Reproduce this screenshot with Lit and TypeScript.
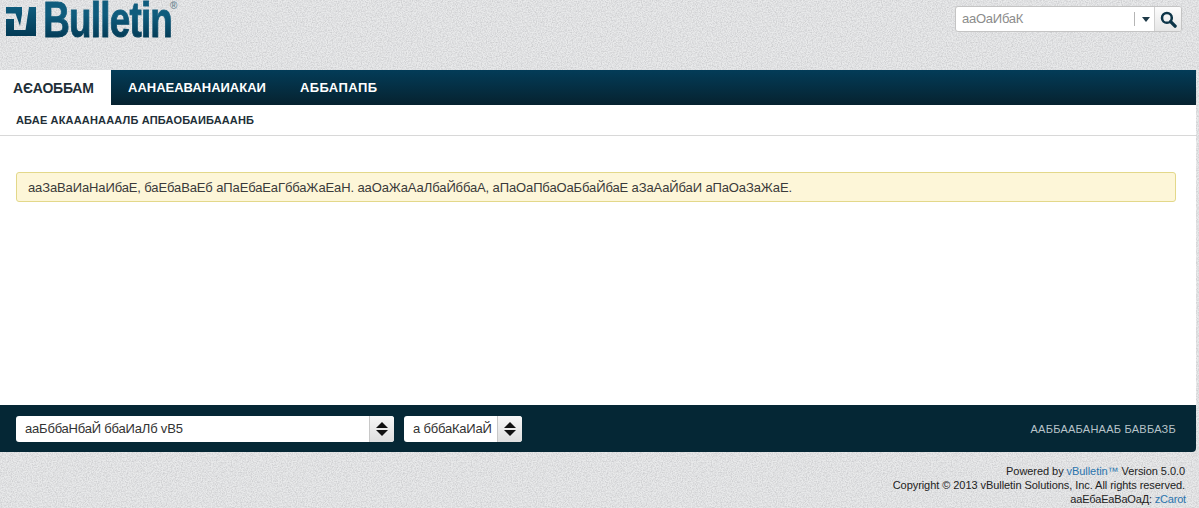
import { LitElement, html, css, unsafeCSS } from "lit";
import { customElement } from "lit/decorators.js";

const noise = `url("data:image/svg+xml,%3Csvg xmlns='http://www.w3.org/2000/svg' width='240' height='240'%3E%3Cfilter id='n' x='0' y='0' width='100%25' height='100%25'%3E%3CfeTurbulence type='fractalNoise' baseFrequency='.8' numOctaves='2' stitchTiles='stitch'/%3E%3CfeColorMatrix values='0 0 0 0 .4 0 0 0 0 .4 0 0 0 0 .42 .9 0 0 0 -.3'/%3E%3C/filter%3E%3Crect width='240' height='240' filter='url(%23n)'/%3E%3C/svg%3E")`;

@customElement("app-root")
export class AppRoot extends LitElement {
  static styles = css`
    :host {
      display: block;
      width: 1199px;
      height: 508px;
      overflow: hidden;
      font-family: "Liberation Sans", Arial, sans-serif;
      background-color: #e9eaeb;
      background-image: ${unsafeCSS(noise)};
      color: #333;
    }
    .page { display: flex; flex-direction: column; width: 1196px; height: 508px; }
    .header { height: 70px; display: flex; justify-content: space-between; align-items: flex-start; flex: none; }
    .logo { display: flex; align-items: flex-start; margin-left: 6px; height: 38px; position: relative; width: 180px; }
    .logo svg { margin-top: 7px; flex: none; }
    .wordmark-clip { width: 133px; height: 38px; overflow: hidden; flex: none; margin-left: 5px; }
    .wordmark {
      display: block; width: max-content; font-size: 50px; font-weight: 700; line-height: 50px; letter-spacing: -1px;
      transform: scaleX(.735); transform-origin: 0 0;
      margin-top: -5px; padding: 0 3px; white-space: nowrap;
      background: linear-gradient(#0f5c7d 14px, #0f5c7d 20px, #023a55 44px);
      -webkit-background-clip: text; background-clip: text; color: transparent;
      -webkit-text-stroke: 1px transparent;
    }
    .reg { position: absolute; left: 164px; top: 1px; font-size: 10px; line-height: 10px; color: #6f8894; font-weight: 700; }
    .search {
      margin: 6px 14px 0 0; width: 227px; height: 26px; box-sizing: border-box;
      display: flex; border: 1px solid #c4c4c4; border-radius: 3px; background: #fff; overflow: hidden;
    }
    .search-input { flex: 1; display: flex; align-items: center; padding: 0 0 1px 6px; font-size: 13px; letter-spacing: -.25px; color: #8c8c8c; }
    .caret-wrap { width: 20px; display: flex; align-items: center; justify-content: center; position: relative; }
    .caret-wrap::before { content: ""; position: absolute; left: 0; top: 5px; bottom: 5px; border-left: 1px solid #b5b5b5; }
    .caret { width: 0; height: 0; border: 4px solid transparent; border-top: 5px solid #1e3a48; border-bottom: 0; margin-left: 4px; margin-top: 1px; }
    .search-btn { width: 26px; display: flex; align-items: center; justify-content: center; background: linear-gradient(#fcfcfc, #e6e6e6); border-left: 1px solid #d0d0d0; }
    .nav {
      flex: none; height: 35px; display: flex;
      background: linear-gradient(#033c58, #06222f);
      font-size: 13px; font-weight: 700; color: #fff;
    }
    .tab { display: flex; align-items: center; padding: 0 17px; white-space: nowrap; }
    .tab.third { letter-spacing: .45px; }
    .tab.active { background: #fff; color: #1f2f38; font-size: 14px; letter-spacing: -.2px; padding: 1px 17px 0 13px; width: 81px; box-sizing: content-box; }
    .subnav {
      flex: none; height: 30px; box-sizing: content-box; background: #fff; border-bottom: 1px solid #d8d8d8;
      display: flex; align-items: center; padding-left: 16px;
      font-size: 11px; letter-spacing: .17px; font-weight: 700; color: #222f38;
    }
    .content { flex: 1; background: #fff; padding: 36px 20px 0 16px; }
    .notice {
      height: 30px; box-sizing: border-box; display: flex; align-items: center; padding: 0 11px;
      background: #fdf6d8; border: 1px solid #e3d88a; border-radius: 3px;
      font-size: 13px; letter-spacing: -.12px; color: #3a3a3a; white-space: nowrap;
    }
    .bar {
      flex: none; height: 47px; box-sizing: border-box; background: #052735; border-bottom-right-radius: 4px;
      display: flex; align-items: center; padding: 0 20px 0 16px; gap: 10px;
    }
    .select {
      height: 26px; box-sizing: border-box; display: flex; background: #fff; border-radius: 3px; overflow: hidden;
      font-size: 13px; letter-spacing: -.2px; color: #333;
    }
    .select .value { flex: 1; display: flex; align-items: center; padding-left: 9px; white-space: nowrap; overflow: hidden; }
    .select .arrows {
      width: 24px; flex: none; display: flex; flex-direction: column; align-items: center; justify-content: center; gap: 2px;
      background: linear-gradient(#f7f7f7, #dedede); border-left: 1px solid #c8c8c8;
    }
    .up { width: 0; height: 0; border: 6px solid transparent; border-bottom: 6px solid #111; border-top: 0; }
    .down { width: 0; height: 0; border: 6px solid transparent; border-top: 6px solid #111; border-bottom: 0; }
    .s1 { width: 378px; }
    .s2 { width: 118px; }
    .bar-link { margin-left: auto; font-size: 11px; color: #b7c3c9; white-space: nowrap; letter-spacing: .25px; }
    .legal {
      flex: none; height: 56px; box-sizing: border-box; padding: 12px 11px 0 0; text-align: right; font-size: 11px; line-height: 14px; color: #222; letter-spacing: -.06px;
    }
    .legal a { color: #2a74ad; text-decoration: none; }
    .legal .last { margin-right: -1px; letter-spacing: -.18px; }
  `;

  render() {
    return html`
      <div class="page">
        <div class="header">
          <div class="logo">
            <svg width="30" height="29" viewBox="0 0 30 29">
              <defs><linearGradient id="g" gradientUnits="userSpaceOnUse" x1="0" y1="0" x2="0" y2="29"><stop offset="0" stop-color="#0f5c7d"/><stop offset="1" stop-color="#023a55"/></linearGradient></defs>
              <path fill="url(#g)" d="M0 0H16V7L14 19L9.5 6.5H0ZM0 12H8V23H19.5L23 0H30V29H0Z"/>
            </svg>
            <div class="wordmark-clip"><span class="wordmark">Bulletin</span></div>
            <span class="reg">®</span>
          </div>
          <div class="search">
            <div class="search-input">ааОаИбаК</div>
            <div class="caret-wrap"><span class="caret"></span></div>
            <div class="search-btn">
              <svg width="17" height="17" viewBox="0 0 16 16"><circle cx="6.5" cy="6.5" r="4.6" fill="none" stroke="#0d3548" stroke-width="2.4"/><path d="M10 10L14.2 14.2" stroke="#0d3548" stroke-width="3.2" stroke-linecap="round"/></svg>
            </div>
          </div>
        </div>
        <div class="nav">
          <div class="tab active">АЄАОББАМ</div>
          <div class="tab">ААНАЕАВАНАИАКАИ</div>
          <div class="tab third">АББАПАПБ</div>
        </div>
        <div class="subnav">АБАЕ АКАААНАААЛБ АПБАОБАИБАААНБ</div>
        <div class="content">
          <div class="notice">ааЗаВаИаНаИбаЕ, баЕбаВаЕб аПаЕбаЕаГббаЖаЕаН. ааОаЖаАаЛбаЙббаА, аПаОаПбаОаБбаЙбаЕ аЗаАаЙбаИ аПаОаЗаЖаЕ.</div>
        </div>
        <div class="bar">
          <div class="select s1"><div class="value">ааБббаНбаЙ ббаИаЛб vB5</div><div class="arrows"><span class="up"></span><span class="down"></span></div></div>
          <div class="select s2"><div class="value">а бббаКаИаЙ</div><div class="arrows"><span class="up"></span><span class="down"></span></div></div>
          <div class="bar-link">ААББААБАНААБ БАВБАЗБ</div>
        </div>
        <div class="legal">
          <div>Powered by <a>vBulletin™</a> Version 5.0.0</div>
          <div>Copyright © 2013 vBulletin Solutions, Inc. All rights reserved.</div>
          <div class="last">ааЕбаЕаВаОаД: <a>zCarot</a></div>
        </div>
      </div>
    `;
  }
}
